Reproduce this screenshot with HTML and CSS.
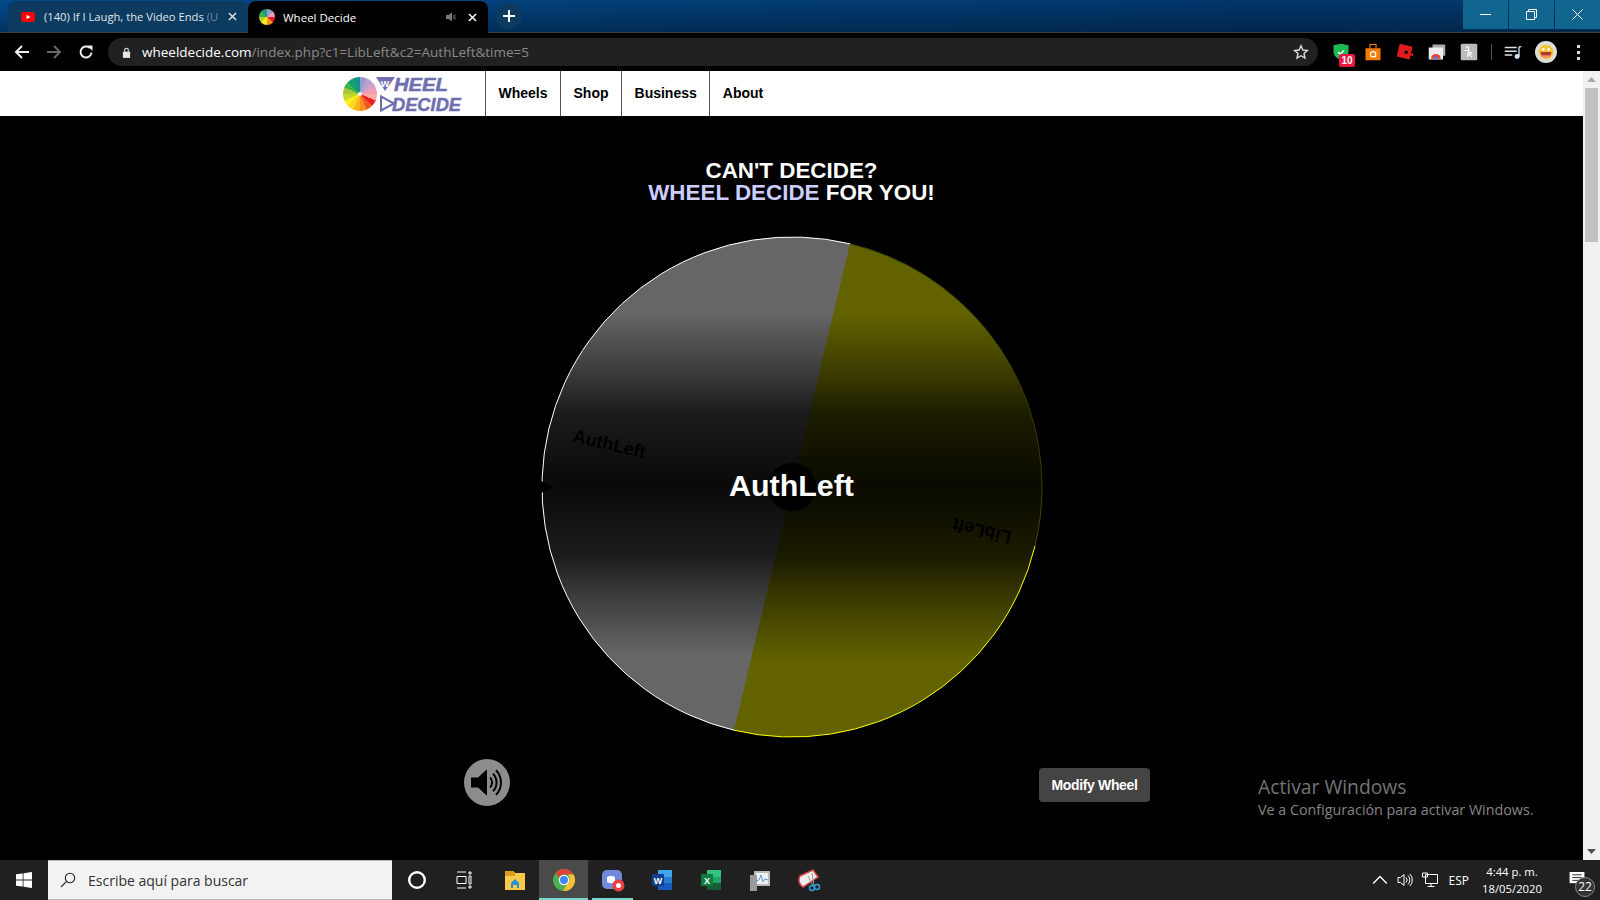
FILE: index.html
```html
<!DOCTYPE html>
<html lang="es">
<head>
<meta charset="utf-8">
<title>Wheel Decide</title>
<link rel="stylesheet" href="styles.css">
</head>
<body>
<div class="screen">
  <header class="browser">
    <div class="tabstrip">
      <div class="tab tab-inactive">
        <svg class="favicon" viewBox="0 0 16 16"><rect x="1" y="3" width="14" height="10" rx="3" fill="#f00"/><path d="M6.5 5.8v4.4L10.5 8z" fill="#fff"/></svg>
        <span class="tab-title">(140) If I Laugh, the Video Ends <span class="tab-fade">(U</span></span>
        <svg class="tab-close" viewBox="0 0 10 10"><path d="M1 1l8 8M9 1L1 9" stroke="#dfe6ec" stroke-width="1.6"/></svg>
      </div>
      <div class="tab tab-active">
        <span class="favicon wheel-small"></span>
        <span class="tab-title">Wheel Decide</span>
        <svg class="tab-audio" viewBox="0 0 12 12"><path d="M1 4h2.500L7 1.500v9L3.500 8H1z" fill="#777"/><path d="M8.500 4v4M10 3v6" stroke="#555" stroke-width="1"/></svg>
        <svg class="tab-close" viewBox="0 0 10 10"><path d="M1 1l8 8M9 1L1 9" stroke="#fff" stroke-width="1.6"/></svg>
      </div>
      <div class="newtab"><svg viewBox="0 0 12 12"><path d="M6 0v12M0 6h12" stroke="#fff" stroke-width="2"/></svg></div>
      <div class="win-controls">
        <div class="win-btn"><svg viewBox="0 0 11 11"><path d="M0 5.500h11" stroke="#fff"/></svg></div>
        <div class="win-btn"><svg viewBox="0 0 11 11"><path d="M.5 2.500h8v8h-8zM2.500 2.500v-2h8v8h-2" fill="none" stroke="#fff"/></svg></div>
        <div class="win-btn"><svg viewBox="0 0 11 11"><path d="M.5.500l10 10M10.500.500l-10 10" stroke="#fff"/></svg></div>
      </div>
    </div>
    <div class="toolbar">
      <svg class="nav-ico" viewBox="0 0 16 16"><path d="M15 8H2M8 2L2 8l6 6" fill="none" stroke="#eee" stroke-width="2"/></svg>
      <svg class="nav-ico" viewBox="0 0 16 16"><path d="M1 8h13M8 2l6 6-6 6" fill="none" stroke="#666" stroke-width="2"/></svg>
      <svg class="nav-ico" viewBox="0 0 16 16"><path d="M13.500 8.500A5.500 5.500 0 1 1 11.800 4" fill="none" stroke="#eee" stroke-width="2"/><path d="M9 1h5.500v5.500z" fill="#eee" transform="translate(0 .5)"/></svg>
      <div class="omnibox">
        <svg class="lock" viewBox="0 0 10 12"><path d="M1 5h8v7H1z" fill="#e8e8e8"/><path d="M3 5V3.200a2 2 0 0 1 4 0V5" fill="none" stroke="#e8e8e8" stroke-width="1.200"/></svg>
        <span class="url"><span class="url-host">wheeldecide.com</span>/index.php?c1=LibLeft&amp;c2=AuthLeft&amp;time=5</span>
        <svg class="star" viewBox="0 0 16 16"><path d="M8 1.800l1.900 4.200 4.500.5-3.400 3 1 4.500L8 11.700 4 14l1-4.500-3.400-3 4.500-.5z" fill="none" stroke="#ddd" stroke-width="1.400"/></svg>
      </div>
      <div class="extensions">
        <div class="ext"><svg viewBox="0 0 24 24"><path d="M2 3l10-2 10 2v9c0 5-5 9-10 11C7 21 2 17 2 12z" fill="#1db954"/><path d="M8 12l3 3 5-5" fill="none" stroke="#fff" stroke-width="2"/></svg><span class="ext-badge">10</span></div>
        <div class="ext"><svg viewBox="0 0 24 24"><path d="M2 7h20v16H2z" fill="#f57c00"/><path d="M8 7V2h8v5" fill="none" stroke="#f57c00" stroke-width="1.500"/><circle cx="12" cy="15" r="3.500" fill="none" stroke="#fff" stroke-width="1.500"/><path d="M15.500 12v7" stroke="#fff" stroke-width="1.500"/></svg></div>
        <div class="ext"><svg viewBox="0 0 24 24"><path d="M5 1l17 4-4 17-17-4z" fill="#e01b1b"/><path d="M12 10l4 1-1 3.500-4-1z" fill="#000"/><path d="M17 14h6v3h-6z" fill="#e01b1b"/></svg></div>
        <div class="ext"><svg viewBox="0 0 24 24"><path d="M6 2h17v15H6z" fill="#aaa"/><path d="M1 6h19v16H1z" fill="#eee"/><path d="M4 21a6.500 6.500 0 0 1 13 0z" fill="#ea4335"/><path d="M7.500 21a3 3 0 0 1 6 0z" fill="#4285f4"/></svg></div>
        <div class="ext"><svg viewBox="0 0 24 24"><rect x="1" y="1" width="22" height="22" rx="2" fill="#bbb"/><path d="M8 6c4-3 4 2 3 6l-1 7M6 10h7M11 13c4-2 6 1 3 2l-2 0 4 4" fill="none" stroke="#fff" stroke-width="1.400"/></svg></div>
        <span class="toolbar-sep"></span>
        <div class="ext"><svg viewBox="0 0 24 24"><path d="M1 6h16M1 11h16M1 16h10" stroke="#ddd" stroke-width="1.800"/><path d="M20 5v13" stroke="#cfe4f2" stroke-width="1.800"/><path d="M20 5h3" stroke="#cfe4f2" stroke-width="1.800"/><circle cx="17.500" cy="18" r="3.300" fill="#cfe4f2"/></svg></div>
        <div class="avatar"><svg viewBox="0 0 24 24"><circle cx="12" cy="12" r="12" fill="#ddd"/><circle cx="12" cy="12" r="8" fill="#f4c430"/><path d="M6 12h12a6 6 0 0 1-12 0z" fill="#b03a2e"/><path d="M8 15.500h8a4 3 0 0 1-8 0z" fill="#f28b82"/><circle cx="9" cy="9" r="1.500" fill="#fff"/><circle cx="15" cy="9" r="1.500" fill="#fff"/></svg></div>
        <div class="kebab"><i></i><i></i><i></i></div>
      </div>
    </div>
  </header>

  <div class="viewport">
    <div class="page">
      <nav class="sitenav">
        <a class="logo">
          <span class="logo-wheel"></span>
          <svg class="logo-word" viewBox="0 0 88 34">
            <path d="M1 0h19L10 14z" fill="#6f6fb0"/>
            <text class="logo-w" x="10" y="9.500" text-anchor="middle">W</text>
            <text class="logo-text" x="19" y="14" textLength="54" lengthAdjust="spacingAndGlyphs">HEEL</text>
            <path d="M6 19.500l13 7-13 7z" fill="#fff" stroke="#6f6fb0" stroke-width="2"/>
            <text class="logo-text" x="17" y="33.500" textLength="69" lengthAdjust="spacingAndGlyphs">DECIDE</text>
          </svg>
        </a>
        <a class="navlink">Wheels</a>
        <a class="navlink">Shop</a>
        <a class="navlink">Business</a>
        <a class="navlink">About</a>
      </nav>
      <main class="stage">
        <h1 class="headline">CAN'T DECIDE?<br><span class="brand">WHEEL DECIDE</span> FOR YOU!</h1>
        <div class="wheel-wrap">
          <svg class="wheel" viewBox="0 0 502 502">
            <defs>
              <linearGradient id="gray" x1="0" y1="0" x2="0" y2="1">
                <stop offset="0" stop-color="#666"/>
                <stop offset=".154" stop-color="#666"/>
                <stop offset=".288" stop-color="#363636"/>
                <stop offset=".354" stop-color="#1c1c1c"/>
                <stop offset=".43" stop-color="#121212"/>
                <stop offset=".5" stop-color="#0a0a0a"/>
                <stop offset=".57" stop-color="#121212"/>
                <stop offset=".646" stop-color="#1c1c1c"/>
                <stop offset=".712" stop-color="#363636"/>
                <stop offset=".846" stop-color="#666"/>
                <stop offset="1" stop-color="#666"/>
              </linearGradient>
              <linearGradient id="olive" x1="0" y1="0" x2="0" y2="1">
                <stop offset="0" stop-color="#626200"/>
                <stop offset=".154" stop-color="#626200"/>
                <stop offset=".288" stop-color="#363600"/>
                <stop offset=".354" stop-color="#1c1c00"/>
                <stop offset=".43" stop-color="#121200"/>
                <stop offset=".5" stop-color="#0a0a00"/>
                <stop offset=".57" stop-color="#121200"/>
                <stop offset=".646" stop-color="#1c1c00"/>
                <stop offset=".712" stop-color="#363600"/>
                <stop offset=".846" stop-color="#626200"/>
                <stop offset="1" stop-color="#626200"/>
              </linearGradient>
            </defs>
            <circle cx="251" cy="251" r="250" fill="url(#olive)"/>
            <path d="M251 251L193 494.200A250 250 0 0 1 309 7.800z" fill="url(#gray)"/>
            <path d="M193 494.200A250 250 0 0 1 309 7.800" fill="none" stroke="#fff" stroke-width="1"/>
            <path d="M309 7.800A250 250 0 0 1 501 251" fill="none" stroke="#3c3c00" stroke-width="1"/>
            <path d="M501 251A250 250 0 0 1 494 310" fill="none" stroke="#444400" stroke-width="1"/>
            <path d="M494 310A250 250 0 0 1 193 494.200" fill="none" stroke="#ffff00" stroke-width="1"/>
            <path d="M0 245l13 6-13 6z" fill="#000"/>
            <circle cx="251" cy="251" r="24" fill="#000"/>
            <text class="slice-label" transform="translate(67 214) rotate(13.500)" text-anchor="middle">AuthLeft</text>
            <text class="slice-label" transform="translate(442 289) rotate(193.500)" text-anchor="middle">LibLeft</text>
          </svg>
          <div class="winner">AuthLeft</div>
        </div>
        <div class="controls">
          <button class="sound"><svg viewBox="0 0 46 46" preserveAspectRatio="none"><circle cx="23" cy="23" r="23" fill="#8c8c8c"/><path d="M7 18h7l9-8v26l-9-8H7z" fill="#000"/><path d="M26 18a7 7 0 0 1 0 10M29 14.500a12 12 0 0 1 0 17M32 11a17 17 0 0 1 0 24" fill="none" stroke="#000" stroke-width="2"/></svg></button>
          <button class="modify">Modify Wheel</button>
        </div>
      </main>
    </div>
    <aside class="scrollbar">
      <div class="sb-arrow"><svg viewBox="0 0 9 5"><path d="M4.500 0L9 5H0z" fill="#a8a8a8"/></svg></div>
      <div class="sb-track"><div class="sb-thumb"></div></div>
      <div class="sb-arrow"><svg viewBox="0 0 9 5"><path d="M0 0h9L4.500 5z" fill="#505050"/></svg></div>
    </aside>
    <div class="activate">
      <div class="activate-title">Activar Windows</div>
      <div class="activate-sub">Ve a Configuración para activar Windows.</div>
    </div>
  </div>

  <footer class="taskbar">
    <div class="start"><svg viewBox="0 0 16 16"><path d="M0 2.300L6.700 1.400v6.200H0zM7.500 1.300L16 0v7.600H7.500zM0 8.400h6.700v6.200L0 13.700zM7.500 8.400H16V16l-8.500-1.300z" fill="#fff"/></svg></div>
    <div class="searchbox">
      <svg viewBox="0 0 16 16"><circle cx="10" cy="6" r="4.700" fill="none" stroke="#222" stroke-width="1.100"/><path d="M6.600 9.400L1 15" stroke="#222" stroke-width="1.100"/></svg>
      <span>Escribe aquí para buscar</span>
    </div>
    <div class="tb-item"><svg viewBox="0 0 20 20"><circle cx="10" cy="10" r="6.500" fill="none" stroke="#fff" stroke-width="2"/></svg></div>
    <div class="tb-item tb-narrow"><svg viewBox="0 0 20 20"><path d="M3 2h9M3 18h9M3 6.500h9v7H3zM15 2h2v2h-2zM15 6h2v8h-2zM15 16h2v2h-2z" fill="none" stroke="#fff" stroke-width="1"/></svg></div>
    <div class="tb-item"><svg viewBox="0 0 24 24"><path d="M2 3h8l2 2h10v17H2z" fill="#f7c948"/><path d="M2 3h8l2 2v3H2z" fill="#d99f1c"/><path d="M8 15l4-4 4 4v5H8z" fill="#2a8fd8"/><path d="M10 17h4v3h-4z" fill="#f7c948"/></svg></div>
    <div class="tb-item tb-active"><svg viewBox="0 0 24 24"><circle cx="12" cy="12" r="11" fill="#4caf50"/><path d="M12 1a11 11 0 0 1 9.500 5.500H12a5.500 5.500 0 0 0-5 3.200L3.500 5A11 11 0 0 1 12 1z" fill="#db4437"/><path d="M21.500 6.500A11 11 0 0 1 11 23l5-8.500a5.500 5.500 0 0 0 0-8z" fill="#fbc02d"/><circle cx="12" cy="12" r="5.200" fill="#fff"/><circle cx="12" cy="12" r="4" fill="#4285f4"/></svg></div>
    <div class="tb-item tb-open"><svg viewBox="0 0 24 24"><rect x="1" y="2" width="20" height="19" rx="5" fill="#7289da"/><path d="M6 9c2-1.500 6-1.500 8 0v5c-2 1.500-6 1.500-8 0z" fill="#fff"/><circle cx="17.500" cy="17.500" r="6" fill="#e9413f"/><circle cx="17.500" cy="17.500" r="2.500" fill="#fff"/></svg></div>
    <div class="tb-item"><svg viewBox="0 0 24 24"><path d="M8 2h14v20H8z" fill="#2b7cd3"/><path d="M8 2h14v7H8z" fill="#41a5ee"/><path d="M8 15h14v7H8z" fill="#185abd"/><rect x="2" y="6" width="12" height="12" fill="#103f91"/><text class="tb-letter" x="8" y="15.500" text-anchor="middle">W</text></svg></div>
    <div class="tb-item"><svg viewBox="0 0 24 24"><path d="M8 2h14v20H8z" fill="#21a366"/><path d="M8 2h14v7H8z" fill="#33c481"/><path d="M8 15h14v7H8z" fill="#185c37"/><rect x="2" y="6" width="12" height="12" fill="#107c41"/><text class="tb-letter" x="8" y="15.500" text-anchor="middle">X</text></svg></div>
    <div class="tb-item"><svg viewBox="0 0 24 24"><path d="M6 3h16v15H6z" fill="#bbb"/><path d="M8 5h12v11H8z" fill="#eef2f5"/><path d="M8 13l3-1 2-5 2 7 2-3 3 1" fill="none" stroke="#5a9bd5" stroke-width="1"/><path d="M2 7h7v16H2z" fill="#9a9a9a"/></svg></div>
    <div class="tb-item"><svg viewBox="0 0 24 24"><path d="M3 8l13-6 5 7-15 10C2 16 1 12 3 8z" fill="#eee" stroke="#d9464c" stroke-width="1.500"/><path d="M11 8l5 10M15 5l2 13" stroke="#999" stroke-width="1"/><circle cx="15" cy="20" r="2.500" fill="none" stroke="#2d9fd9" stroke-width="1.500"/><circle cx="20" cy="19" r="2.500" fill="none" stroke="#2d9fd9" stroke-width="1.500"/></svg></div>
    <div class="tray">
      <svg class="tray-ico" viewBox="0 0 14 8"><path d="M1 7l6-6 6 6" fill="none" stroke="#fff" stroke-width="1.200"/></svg>
      <svg class="tray-ico" viewBox="0 0 16 16"><path d="M1 5.500h2.500L7 2.500v11l-3.500-3H1z" fill="none" stroke="#fff"/><path d="M9 5.500a3.500 3.500 0 0 1 0 5M11 3.500a6.500 6.500 0 0 1 0 9M13 2a9 9 0 0 1 0 12" fill="none" stroke="#fff"/></svg>
      <svg class="tray-ico" viewBox="0 0 16 16"><path d="M3.500 2.500h12v9h-12zM9 11.500v2.500M5.500 14.500h7M.5 1h5v4h-5z" fill="#202020" stroke="#fff"/></svg>
      <span class="lang">ESP</span>
      <div class="clock"><div>4:44 p. m.</div><div>18/05/2020</div></div>
      <div class="notify">
        <svg viewBox="0 0 16 14"><path d="M0 0h16v12H0z" fill="#fff"/><path d="M3 3h10M3 6h10M3 9h7" stroke="#202020"/></svg>
        <span class="notify-badge">22</span>
      </div>
    </div>
  </footer>
</div>
</body>
</html>
```
FILE: styles.css
```css
* { box-sizing: border-box; }
html, body { margin: 0; height: 100%; background: #000; overflow: hidden; }
svg { display: block; }
.screen { width: 1600px; height: 900px; display: flex; flex-direction: column; font-family: "Open Sans", "Noto Sans", sans-serif; }

/* browser chrome */
.browser { flex: none; height: 71px; display: flex; flex-direction: column; }
.tabstrip { flex: none; height: 33px; display: flex; align-items: stretch; padding-left: 8px; background: linear-gradient(180deg, rgba(0,0,0,0), rgba(0,0,0,.3)), linear-gradient(90deg, #024a8c 0%, #023f78 40%, #01366c 80%, #023a6c 100%); border-bottom: 1px solid #3a4048; }
.tab { flex: none; width: 240px; margin-top: 1px; margin-bottom: -1px; border-radius: 8px 8px 0 0; display: flex; align-items: center; padding: 0 11px 0 12px; gap: 8px; color: #fff; font-size: 11.5px; }
.tab-inactive { background: #0d3a5f; color: #dfe6ec; margin-bottom: 0; font-size: 11.2px; }
.tab-active { background: #000; padding-left: 11px; }
.tab-fade { color: #6f8ca6; }
.favicon { flex: none; width: 16px; height: 16px; }
.wheel-small { border-radius: 50%; background: conic-gradient(#9a9acb 0 45deg, #f29fc0 45deg 90deg, #ee1c25 90deg 135deg, #f7931e 135deg 180deg, #fcee21 180deg 225deg, #b5cf2e 225deg 270deg, #39b54a 270deg 315deg, #1f9e7a 315deg 360deg); }
.tab-title { flex: 1; min-width: 0; white-space: nowrap; }
.tab-close { flex: none; width: 9px; height: 9px; }
.tab-audio { flex: none; width: 12px; height: 12px; margin-right: 3px; }
.newtab { flex: none; width: 26px; height: 26px; margin: 3px 0 0 8px; border-radius: 50%; background: #0d3a5f; display: flex; align-items: center; justify-content: center; }
.newtab svg { width: 12px; height: 12px; }
.win-controls { margin-left: auto; display: flex; gap: 1px; height: 29px; }
.win-btn { width: 45px; background: #10668f; display: flex; align-items: center; justify-content: center; }
.win-btn svg { width: 11px; height: 11px; }

.toolbar { flex: 1; background: #000; display: flex; align-items: center; padding-left: 14px; }
.nav-ico { flex: none; width: 16px; height: 16px; margin-right: 16px; }
.omnibox { flex: none; width: 1210px; height: 28px; margin-left: -2px; border-radius: 14px; background: #212121; display: flex; align-items: center; padding: 0 9px 0 14px; }
.lock { flex: none; width: 9px; height: 11px; margin-right: 11px; }
.url { flex: 1; font-size: 13.5px; color: #8a8a8a; white-space: nowrap; }
.url-host { color: #fff; }
.star { flex: none; width: 16px; height: 16px; }
.extensions { flex: 1; display: flex; align-items: center; padding-left: 7px; }
.ext { position: relative; flex: none; width: 32px; height: 24px; display: flex; justify-content: center; align-items: center; }
.ext svg { width: 18px; height: 18px; }
.ext-badge { position: absolute; left: 14px; top: 14px; width: 16px; height: 13px; border-radius: 2px; background: #e8173f; color: #fff; font: bold 10px/13px "Liberation Sans", sans-serif; text-align: center; }
.toolbar-sep { flex: none; width: 1px; height: 16px; background: #555; margin: 0 5px 0 6px; }
.avatar { flex: none; width: 22px; height: 22px; margin-left: 6px; }
.avatar svg { width: 22px; height: 22px; }
.kebab { flex: none; width: 3px; margin-left: 20px; display: flex; flex-direction: column; gap: 3px; }
.kebab i { display: block; height: 3px; background: #ddd; }

/* page */
.viewport { position: relative; flex: none; height: 789px; display: flex; overflow: hidden; }
.page { flex: 1; min-width: 0; background: #000; display: flex; flex-direction: column; }
.sitenav { flex: none; height: 45px; background: #fff; display: flex; padding-left: 343px; }
.logo { flex: none; width: 142px; display: flex; align-items: center; }
.logo-wheel { position: relative; flex: none; width: 34px; height: 34px; border-radius: 50%; background: conic-gradient(#9a9acb 0 22.5deg, #b8a2cf 22.5deg 45deg, #d8a0cc 45deg 67.5deg, #f29fb5 67.5deg 90deg, #f8aaa5 90deg 112.5deg, #ee1c25 112.5deg 135deg, #f15a24 135deg 157.5deg, #f7931e 157.5deg 180deg, #fcb41e 180deg 202.5deg, #fcd91e 202.5deg 225deg, #fcee21 225deg 247.5deg, #c8d82e 247.5deg 270deg, #a6c93a 270deg 292.5deg, #39b54a 292.5deg 315deg, #17a06a 315deg 337.5deg, #14908f 337.5deg 360deg); margin-top: 1px; }
.logo-wheel::after { content: ""; position: absolute; left: 15px; top: 15px; width: 4px; height: 4px; border-radius: 50%; background: #fff; }
.logo-word { flex: none; width: 88px; height: 34px; margin: 1px 0 0 -2px; overflow: visible; }
.logo-text { font: italic bold 19px "Liberation Sans", sans-serif; fill: #6f6fb0; stroke: #6f6fb0; stroke-width: .5px; }
.logo-w { font: bold 9px "Liberation Sans", sans-serif; fill: #fff; }
.navlink { flex: none; border-left: 1px solid #555; padding: 0 12.5px 2px; display: flex; align-items: center; font: bold 14px "Liberation Sans", sans-serif; color: #000; }
.stage { flex: 1; display: flex; flex-direction: column; align-items: center; padding-top: 44px; color: #fff; }
.headline { margin: 0; font: bold 22.4px/22px "Liberation Sans", sans-serif; text-align: center; }
.brand { color: #ccccff; }
.wheel-wrap { position: relative; width: 502px; height: 502px; margin-top: 32px; }
.wheel { width: 502px; height: 502px; }
.slice-label { font: bold 18px "Liberation Sans", sans-serif; fill: #000; }
.winner { position: absolute; left: 0; right: 0; top: 228px; text-align: center; font: bold 30.4px/42px "Liberation Sans", sans-serif; color: #fff; }
.controls { width: 686px; margin: 21px 0 0 30px; display: flex; justify-content: space-between; align-items: flex-start; }
.sound { padding: 0; border: 0; background: none; width: 46px; height: 47px; }
.sound svg { width: 46px; height: 47px; }
.modify { margin-top: 9px; height: 34px; width: 111px; padding: 0 0 0 1px; border: 0; border-radius: 4px; background: #444; color: #fff; font: bold 14px "Liberation Sans", sans-serif; letter-spacing: -.35px; }

.scrollbar { flex: none; width: 17px; background: #f1f1f1; display: flex; flex-direction: column; }
.sb-arrow { flex: none; height: 17px; background: #f1f1f1; display: flex; align-items: center; justify-content: center; }
.sb-arrow svg { width: 9px; height: 5px; }
.sb-track { flex: 1; }
.sb-thumb { width: 13px; height: 154px; margin-left: 2px; background: #c1c1c1; }
.activate { position: absolute; left: 1258px; top: 702px; color: #8c8c8c; }
.activate-title { font-size: 19.3px; line-height: 28px; color: #747474; }
.activate-sub { font-size: 14.3px; line-height: 18px; color: #858585; }

/* taskbar */
.taskbar { flex: none; height: 40px; background: #202020; display: flex; align-items: stretch; }
.start { flex: none; width: 48px; display: flex; align-items: center; justify-content: center; }
.start svg { width: 16px; height: 16px; }
.searchbox { flex: none; width: 344px; background: #f2f2f2; border: 1px solid #b8b8b8; border-width: 1px 0; display: flex; align-items: center; padding-left: 12px; gap: 12px; font-size: 14px; color: #333; }
.searchbox svg { width: 16px; height: 16px; }
.tb-item { flex: none; width: 49px; display: flex; align-items: center; justify-content: center; border-top: 2px solid transparent; border-bottom: 2px solid transparent; }
.tb-item svg { width: 24px; height: 24px; }
.tb-narrow svg { width: 20px; height: 20px; margin-right: 4px; }
.tb-active { background: #4a4a4a; border-bottom-color: #76d6cc; }
.tb-open { position: relative; }
.tb-open::after { content: ""; position: absolute; left: 4px; right: 4px; bottom: -2px; height: 2px; background: #76d6cc; }
.tb-letter { font: bold 9px "Liberation Sans", sans-serif; fill: #fff; }
.tray { margin-left: auto; display: flex; align-items: center; color: #fff; }
.tray-ico { flex: none; width: 16px; height: 16px; margin-right: 9px; }
.lang { font-size: 12px; margin: 0 9px 0 2px; }
.clock { width: 68px; margin-right: 8px; text-align: center; font-size: 11.3px; line-height: 17px; }
.notify { position: relative; width: 46px; height: 40px; display: flex; align-items: center; justify-content: center; }
.notify svg { width: 16px; height: 13px; margin-top: -4px; }
.notify-badge { position: absolute; left: 21px; top: 17px; width: 20px; height: 20px; border-radius: 50%; background: #333; border: 1px solid #888; font-size: 12px; line-height: 18px; text-align: center; }
```
